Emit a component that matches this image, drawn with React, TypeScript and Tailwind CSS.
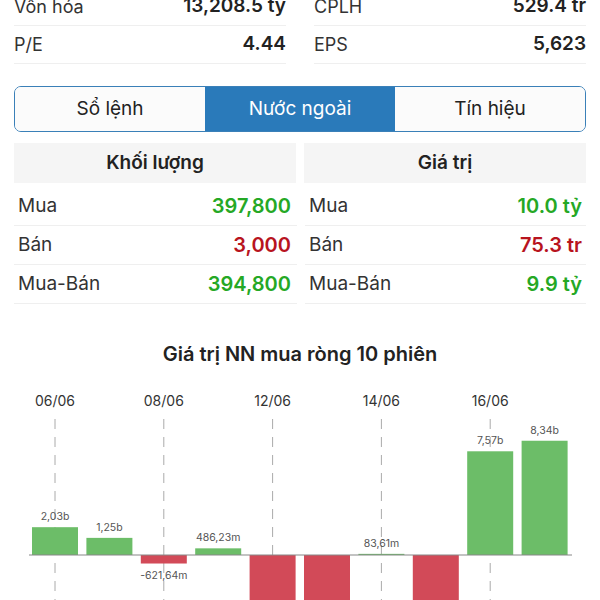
import React from "react";

const stats = [
  [
    { label: "Vốn hóa", value: "13,208.5 tỷ" },
    { label: "CPLH", value: "529.4 tr" },
  ],
  [
    { label: "P/E", value: "4.44" },
    { label: "EPS", value: "5,623" },
  ],
];

const tabs = ["Sổ lệnh", "Nước ngoài", "Tín hiệu"];

const foreign = [
  { label: "Mua", vol: "397,800", val: "10.0 tỷ", color: "text-[#25a825]" },
  { label: "Bán", vol: "3,000", val: "75.3 tr", color: "text-[#b8141e]" },
  { label: "Mua-Bán", vol: "394,800", val: "9.9 tỷ", color: "text-[#25a825]" },
];

// net foreign value per session, in billions
const sessions = [
  { v: 2.03, label: "2,03b" },
  { v: 1.25, label: "1,25b" },
  { v: -0.62164, label: "-621,64m" },
  { v: 0.48623, label: "486,23m" },
  { v: -4.2, label: "" },
  { v: -4.6, label: "" },
  { v: 0.08361, label: "83,61m" },
  { v: -3.9, label: "" },
  { v: 7.57, label: "7,57b" },
  { v: 8.34, label: "8,34b" },
];

const dates = ["06/06", "08/06", "12/06", "14/06", "16/06"];

function NetChart() {
  const base = 224; // baseline y inside the svg
  const scale = 13.7;
  const pitch = 54.4;
  const x0 = 32;
  const w = 46;
  return (
    <svg width="600" height="270" viewBox="0 0 600 270" className="block">
      {dates.map((d, i) => {
        const cx = x0 + w / 2 + i * 2 * pitch;
        return (
          <g key={d}>
            <text x={cx} y={75} textAnchor="middle" fontSize="14" fill="#333" fontFamily="Inter, 'Liberation Sans', sans-serif">
              {d}
            </text>
            <line x1={cx} y1={88} x2={cx} y2={270} stroke="#aaa" strokeWidth="1" strokeDasharray="10 8" />
          </g>
        );
      })}
      {sessions.map((s, i) => {
        const x = x0 + i * pitch;
        const h = Math.abs(s.v) * scale;
        const pos = s.v >= 0;
        const y = pos ? base - h : base;
        return (
          <g key={i}>
            <rect x={x} y={y} width={w} height={Math.max(h, 1)} fill={pos ? "#6cbd68" : "#d24a58"} />
            {s.label && (
              <text
                x={x + w / 2}
                y={pos ? y - 7 : y + h + 15}
                textAnchor="middle"
                fontSize="10.5"
                fill="#555"
                fontFamily="Inter, 'Liberation Sans', sans-serif"
              >
                {s.label}
              </text>
            )}
          </g>
        );
      })}
      <line x1={29} y1={base} x2={572} y2={base} stroke="#888" strokeWidth="1.2" />
    </svg>
  );
}

export default function App() {
  return (
    <div className="w-[600px] h-[600px] overflow-hidden bg-white text-[#222]" style={{ fontFamily: "Inter, 'Liberation Sans', sans-serif" }}>
      <div className="-mt-[12px] px-[14px]">
        {stats.map((row, i) => (
          <div key={i} className="flex gap-[28px]">
            {row.map((s) => (
              <div key={s.label} className="flex-1 flex items-center justify-between h-[38px] border-b border-[#efefef] text-[18px]">
                <span className="text-[#333]">{s.label}</span>
                <span className="font-semibold text-[19px]">{s.value}</span>
              </div>
            ))}
          </div>
        ))}

        <div className="mt-[22px] flex h-[46px] border border-[#3a80b8] rounded-[7px] overflow-hidden">
          {tabs.map((t, i) => (
            <div
              key={t}
              className={
                i === 1
                  ? "flex-1 flex items-center justify-center bg-[#2a7aba] text-white text-[19px]"
                  : "flex-1 flex items-center justify-center bg-[#fbfbfb] text-[#222] text-[19px]"
              }
            >
              {t}
            </div>
          ))}
        </div>

        <div className="mt-[11px] mb-[4px] flex gap-[8px]">
          <div className="flex-1 h-[40px] bg-[#f5f5f5] flex items-center justify-center font-semibold text-[19px]">Khối lượng</div>
          <div className="flex-1 h-[40px] bg-[#f5f5f5] flex items-center justify-center font-semibold text-[19px]">Giá trị</div>
        </div>

        {foreign.map((r) => (
          <div key={r.label} className="flex gap-[8px]">
            <div className="flex-1 flex items-center justify-between h-[39px] border-b border-[#efefef] pl-[4px] pr-[6px] text-[19px]">
              <span className="text-[#333]">{r.label}</span>
              <span className={"font-semibold text-[20px] " + r.color}>{r.vol}</span>
            </div>
            <div className="flex-1 flex items-center justify-between h-[39px] border-b border-[#efefef] pl-[4px] pr-[4px] text-[19px]">
              <span className="text-[#333]">{r.label}</span>
              <span className={"font-semibold text-[20px] " + r.color}>{r.val}</span>
            </div>
          </div>
        ))}
      </div>

      <div className="mt-[35px] text-center font-semibold text-[20px]">Giá trị NN mua ròng 10 phiên</div>
      <div className="-mt-[38px]">
        <NetChart />
      </div>
    </div>
  );
}
